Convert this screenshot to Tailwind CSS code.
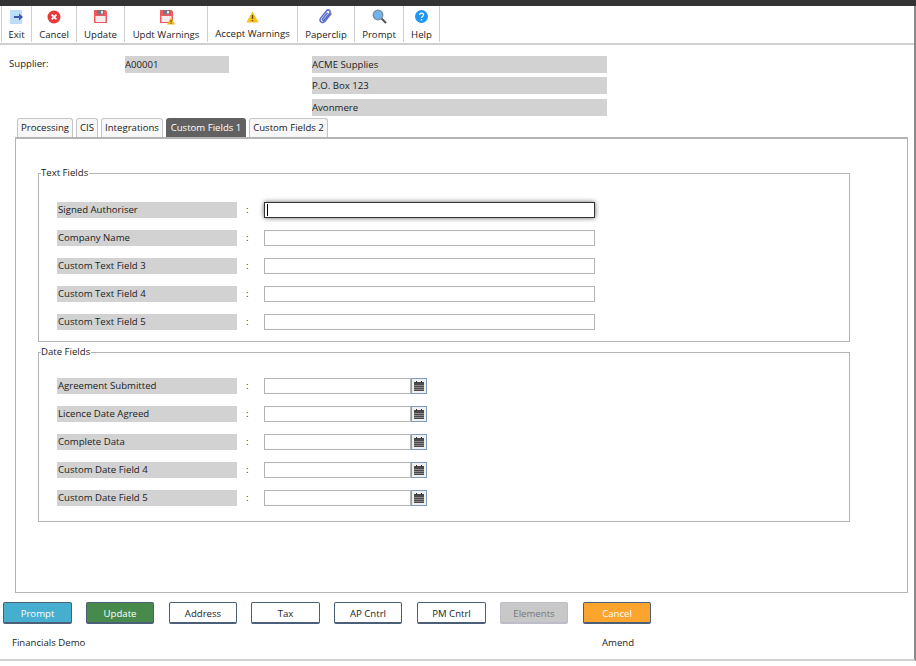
<!DOCTYPE html>
<html lang="en">
<head>
    <meta charset="UTF-8">
    <meta name="viewport" content="width=device-width, initial-scale=1.0">
    <title>Supplier - Custom Fields</title>
    <script src="https://cdn.jsdelivr.net/npm/@tailwindcss/browser@4"></script>
</head>
<body class="bg-white font-['Open_Sans',sans-serif] text-[9.6px] leading-[14px] text-[#1c1c1c]">
<div class="w-[916px] h-[666px] overflow-hidden flex flex-col">
    <div class="h-[6px] bg-[#333333] shrink-0"></div>
    <div class="h-[655px] border-r-2 border-r-[#8a8a8a] border-b-2 border-b-[#d0d0d0] flex flex-col">

        <!-- toolbar -->
        <div class="h-[39px] border-b-2 border-b-[#d0d0d0] flex items-stretch shrink-0 pl-[1px]">
            <div class="w-[31px] border-x border-x-[#cfcfcf] h-[36px] flex flex-col items-center">
                <svg class="mt-[3px]" width="14" height="16" viewBox="0 0 14 16"><rect x="0" y="1" width="12" height="14" fill="#bcdcf8"/><path d="M4 8h6" stroke="#3d55b5" stroke-width="2"/><path d="M9 4.500l4 3.500-4 3.500z" fill="#3d55b5"/></svg>
                <span class="mt-[3px]">Exit</span>
            </div>
            <div class="w-[45px] border-r border-r-[#cfcfcf] h-[36px] flex flex-col items-center">
                <svg class="mt-[4px]" width="14" height="14" viewBox="0 0 14 14"><circle cx="7" cy="7" r="6.500" fill="#e8383a"/><path d="M4.600 4.600l4.800 4.800M9.400 4.600l-4.800 4.800" stroke="#fff" stroke-width="1.800"/></svg>
                <span class="mt-[4px]">Cancel</span>
            </div>
            <div class="w-[48px] border-r border-r-[#cfcfcf] h-[36px] flex flex-col items-center">
                <svg class="mt-[4px]" width="13" height="14" viewBox="0 0 13 14"><path d="M0 0h11.500l1.500 1.500V13H0z" fill="#ef5a5e"/><rect x="3" y="0" width="7" height="4.500" fill="#75757d"/><rect x="7" y="1" width="2" height="2.500" fill="#e8e8ee"/><rect x="1.500" y="6" width="10" height="6" fill="#f4ecec"/></svg>
                <span class="mt-[4px]">Update</span>
            </div>
            <div class="w-[83px] border-r border-r-[#cfcfcf] h-[36px] flex flex-col items-center">
                <svg class="mt-[4px] ml-[3px]" width="15" height="15" viewBox="0 0 15 15"><path d="M0 0h11.500l1.500 1.500V13H0z" fill="#ef5a5e"/><rect x="3" y="0" width="7" height="4.500" fill="#75757d"/><rect x="7" y="1" width="2" height="2.500" fill="#e8e8ee"/><rect x="1.500" y="6" width="10" height="6" fill="#f4ecec"/><path d="M11 7.500l4 7h-8z" fill="#f5b71d"/><path d="M11 10v2.400M11 13v.8" stroke="#5a4300" stroke-width="1"/></svg>
                <span class="mt-[3px]">Updt Warnings</span>
            </div>
            <div class="w-[90px] border-r border-r-[#cfcfcf] h-[36px] flex flex-col items-center">
                <svg class="mt-[5px]" width="13" height="12" viewBox="0 0 13 12"><path d="M6.500 0.500l6.200 11H0.300z" fill="#f7c21e"/><path d="M6.500 4v4" stroke="#6b4f00" stroke-width="1.400"/><path d="M6.500 9v1.400" stroke="#6b4f00" stroke-width="1.400"/></svg>
                <span class="mt-[4px]">Accept Warnings</span>
            </div>
            <div class="w-[57px] border-r border-r-[#cfcfcf] h-[36px] flex flex-col items-center">
                <svg class="mt-[3px]" width="14" height="15" viewBox="0 0 14 15" fill="none"><path d="M12.400 4.400L6.200 12.100c-1.200 1.400-3 1.700-4.200.7-1.200-1-1.200-2.700 0-4.200l5.400-6.600c.9-1.100 2.200-1.300 3.100-.6.9.7.9 2 0 3.100L5.300 10.800c-.5.6-1.200.7-1.600.4-.5-.4-.4-1 .1-1.600l4.700-5.800" stroke="#5b6cc9" stroke-width="1.500"/></svg>
                <span class="mt-[4px]">Paperclip</span>
            </div>
            <div class="w-[49px] border-r border-r-[#cfcfcf] h-[36px] flex flex-col items-center">
                <svg class="mt-[3px]" width="15" height="15" viewBox="0 0 15 15"><circle cx="6" cy="6" r="4.800" fill="#6fb4ee" stroke="#7d8c98" stroke-width="1.300"/><path d="M9.600 9.600l4.400 4.400" stroke="#4a4f55" stroke-width="2"/></svg>
                <span class="mt-[4px]">Prompt</span>
            </div>
            <div class="w-[36px] border-r border-r-[#cfcfcf] h-[36px] flex flex-col items-center">
                <svg class="mt-[4px]" width="13" height="13" viewBox="0 0 13 13"><circle cx="6.500" cy="6.500" r="6.500" fill="#2196f3"/><path d="M4.600 5c0-2.400 3.900-2.400 3.900-.1 0 1.500-2 1.500-2 3" fill="none" stroke="#fff" stroke-width="1.300"/><rect x="5.800" y="9" width="1.400" height="1.500" fill="#fff"/></svg>
                <span class="mt-[5px]">Help</span>
            </div>
        </div>

        <!-- supplier header -->
        <div class="h-[73px] pl-[9px] pt-[11px] flex shrink-0">
            <span class="w-[116px] h-[17px] leading-[16px]">Supplier:</span>
            <div class="w-[104px] h-[17px] bg-[#d2d2d2] leading-[17px]">A00001</div>
            <div class="ml-[83px] w-[295px] flex flex-col">
                <div class="h-[17px] bg-[#d2d2d2] leading-[17px]">ACME Supplies</div>
                <div class="h-[17px] mt-[4px] bg-[#d2d2d2] leading-[17px]">P.O. Box 123</div>
                <div class="h-[17px] mt-[5px] bg-[#d2d2d2] leading-[17px]">Avonmere</div>
            </div>
        </div>

        <!-- tabs -->
        <div class="h-[19px] pl-[17px] flex gap-[3px] shrink-0 items-end">
            <div class="h-[19px] w-[56px] border border-b-0 border-[#c4c4c4] rounded-t-[3px] bg-[#f7f7f7] text-center leading-[18px]">Processing</div>
            <div class="h-[19px] w-[22px] border border-b-0 border-[#c4c4c4] rounded-t-[3px] bg-[#f7f7f7] text-center leading-[18px]">CIS</div>
            <div class="h-[19px] w-[62px] border border-b-0 border-[#c4c4c4] rounded-t-[3px] bg-[#f7f7f7] text-center leading-[18px]">Integrations</div>
            <div class="h-[19px] w-[80px] rounded-t-[3px] bg-[#616161] text-white text-center leading-[19px]">Custom Fields 1</div>
            <div class="h-[19px] w-[79px] border border-b-0 border-[#c4c4c4] rounded-t-[3px] bg-[#f7f7f7] text-center leading-[18px]">Custom Fields 2</div>
        </div>

        <!-- tab panel -->
        <div class="ml-[15px] mr-[6px] h-[456px] border border-[#b4b4b4] border-t-2 pl-[22px] pt-[27px] shrink-0">
            <fieldset class="w-[812px] h-[176px] border border-[#b4b4b4]">
                <legend class="ml-[2px] pr-[1px] leading-[14px]">Text Fields</legend>
                <div class="flex flex-col gap-[12px] pl-[18px] pt-[22px]">
                    <div class="flex h-[16px]">
                        <span class="w-[180px] bg-[#d2d2d2] leading-[16px] pl-[1px]">Signed Authoriser</span>
                        <span class="w-[27px] pl-[9px] leading-[16px]">:</span>
                        <div class="w-[331px] border border-[#333] shadow-[0_0_5px_rgba(0,0,0,0.6)] flex items-center pl-[2px]"><span class="w-[1px] h-[12px] bg-black"></span></div>
                    </div>
                    <div class="flex h-[16px]">
                        <span class="w-[180px] bg-[#d2d2d2] leading-[16px] pl-[1px]">Company Name</span>
                        <span class="w-[27px] pl-[9px] leading-[16px]">:</span>
                        <div class="w-[331px] border border-[#b4b4b4]"></div>
                    </div>
                    <div class="flex h-[16px]">
                        <span class="w-[180px] bg-[#d2d2d2] leading-[16px] pl-[1px]">Custom Text Field 3</span>
                        <span class="w-[27px] pl-[9px] leading-[16px]">:</span>
                        <div class="w-[331px] border border-[#b4b4b4]"></div>
                    </div>
                    <div class="flex h-[16px]">
                        <span class="w-[180px] bg-[#d2d2d2] leading-[16px] pl-[1px]">Custom Text Field 4</span>
                        <span class="w-[27px] pl-[9px] leading-[16px]">:</span>
                        <div class="w-[331px] border border-[#b4b4b4]"></div>
                    </div>
                    <div class="flex h-[16px]">
                        <span class="w-[180px] bg-[#d2d2d2] leading-[16px] pl-[1px]">Custom Text Field 5</span>
                        <span class="w-[27px] pl-[9px] leading-[16px]">:</span>
                        <div class="w-[331px] border border-[#b4b4b4]"></div>
                    </div>
                </div>
            </fieldset>
            <fieldset class="w-[812px] h-[177px] mt-[3px] border border-[#b4b4b4]">
                <legend class="ml-[2px] pr-[1px] leading-[14px]">Date Fields</legend>
                <div class="flex flex-col gap-[12px] pl-[18px] pt-[19px]">
                    <div class="flex h-[16px]">
                        <span class="w-[180px] bg-[#d2d2d2] leading-[16px] pl-[1px]">Agreement Submitted</span>
                        <span class="w-[27px] pl-[9px] leading-[16px]">:</span>
                        <div class="w-[147px] border border-[#b4b4b4]"></div>
                        <div class="w-[16px] border border-[#7f9cc0] bg-[#efefef] flex items-center justify-center"><svg width="10" height="10" viewBox="0 0 10 10"><rect y="1" width="10" height="9" fill="#4a4a4a"/><path d="M0 4.500h10M0 6.500h10M0 8.500h10" stroke="#9a9a9a" stroke-width="0.800"/><rect x="2" y="0" width="1" height="2" fill="#333"/><rect x="7" y="0" width="1" height="2" fill="#333"/></svg></div>
                    </div>
                    <div class="flex h-[16px]">
                        <span class="w-[180px] bg-[#d2d2d2] leading-[16px] pl-[1px]">Licence Date Agreed</span>
                        <span class="w-[27px] pl-[9px] leading-[16px]">:</span>
                        <div class="w-[147px] border border-[#b4b4b4]"></div>
                        <div class="w-[16px] border border-[#7f9cc0] bg-[#efefef] flex items-center justify-center"><svg width="10" height="10" viewBox="0 0 10 10"><rect y="1" width="10" height="9" fill="#4a4a4a"/><path d="M0 4.500h10M0 6.500h10M0 8.500h10" stroke="#9a9a9a" stroke-width="0.800"/><rect x="2" y="0" width="1" height="2" fill="#333"/><rect x="7" y="0" width="1" height="2" fill="#333"/></svg></div>
                    </div>
                    <div class="flex h-[16px]">
                        <span class="w-[180px] bg-[#d2d2d2] leading-[16px] pl-[1px]">Complete Data</span>
                        <span class="w-[27px] pl-[9px] leading-[16px]">:</span>
                        <div class="w-[147px] border border-[#b4b4b4]"></div>
                        <div class="w-[16px] border border-[#7f9cc0] bg-[#efefef] flex items-center justify-center"><svg width="10" height="10" viewBox="0 0 10 10"><rect y="1" width="10" height="9" fill="#4a4a4a"/><path d="M0 4.500h10M0 6.500h10M0 8.500h10" stroke="#9a9a9a" stroke-width="0.800"/><rect x="2" y="0" width="1" height="2" fill="#333"/><rect x="7" y="0" width="1" height="2" fill="#333"/></svg></div>
                    </div>
                    <div class="flex h-[16px]">
                        <span class="w-[180px] bg-[#d2d2d2] leading-[16px] pl-[1px]">Custom Date Field 4</span>
                        <span class="w-[27px] pl-[9px] leading-[16px]">:</span>
                        <div class="w-[147px] border border-[#b4b4b4]"></div>
                        <div class="w-[16px] border border-[#7f9cc0] bg-[#efefef] flex items-center justify-center"><svg width="10" height="10" viewBox="0 0 10 10"><rect y="1" width="10" height="9" fill="#4a4a4a"/><path d="M0 4.500h10M0 6.500h10M0 8.500h10" stroke="#9a9a9a" stroke-width="0.800"/><rect x="2" y="0" width="1" height="2" fill="#333"/><rect x="7" y="0" width="1" height="2" fill="#333"/></svg></div>
                    </div>
                    <div class="flex h-[16px]">
                        <span class="w-[180px] bg-[#d2d2d2] leading-[16px] pl-[1px]">Custom Date Field 5</span>
                        <span class="w-[27px] pl-[9px] leading-[16px]">:</span>
                        <div class="w-[147px] border border-[#b4b4b4]"></div>
                        <div class="w-[16px] border border-[#7f9cc0] bg-[#efefef] flex items-center justify-center"><svg width="10" height="10" viewBox="0 0 10 10"><rect y="1" width="10" height="9" fill="#4a4a4a"/><path d="M0 4.500h10M0 6.500h10M0 8.500h10" stroke="#9a9a9a" stroke-width="0.800"/><rect x="2" y="0" width="1" height="2" fill="#333"/><rect x="7" y="0" width="1" height="2" fill="#333"/></svg></div>
                    </div>
                </div>
            </fieldset>
        </div>

        <!-- buttons -->
        <div class="mt-[9px] pl-[3px] flex shrink-0">
            <div class="w-[69px] h-[22px] bg-[#46afd0] border border-[#4b6078] border-b-2 rounded-[2px] text-white text-center leading-[21px]">Prompt</div>
            <div class="ml-[14px] w-[68px] h-[22px] bg-[#478a4b] border border-[#4b6078] border-b-2 rounded-[2px] text-white text-center leading-[21px]">Update</div>
            <div class="ml-[15px] w-[68px] h-[22px] bg-white border border-[#4b6078] border-b-2 rounded-[2px] text-center leading-[21px]">Address</div>
            <div class="ml-[14px] w-[69px] h-[22px] bg-white border border-[#4b6078] border-b-2 rounded-[2px] text-center leading-[21px]">Tax</div>
            <div class="ml-[14px] w-[68px] h-[22px] bg-white border border-[#4b6078] border-b-2 rounded-[2px] text-center leading-[21px]">AP Cntrl</div>
            <div class="ml-[15px] w-[69px] h-[22px] bg-white border border-[#4b6078] border-b-2 rounded-[2px] text-center leading-[21px]">PM Cntrl</div>
            <div class="ml-[14px] w-[68px] h-[22px] bg-[#c8c8c8] border border-[#bdbdc9] border-b-2 rounded-[2px] text-[#777] text-center leading-[21px]">Elements</div>
            <div class="ml-[15px] w-[68px] h-[22px] bg-[#fba52e] border border-[#4b6078] border-b-2 rounded-[2px] text-white text-center leading-[21px]">Cancel</div>
        </div>

        <!-- footer -->
        <div class="pl-[12px] mt-[12px] flex">
            <span class="w-[590px]">Financials Demo</span>
            <span>Amend</span>
        </div>
    </div>
</div>
</body>
</html>
